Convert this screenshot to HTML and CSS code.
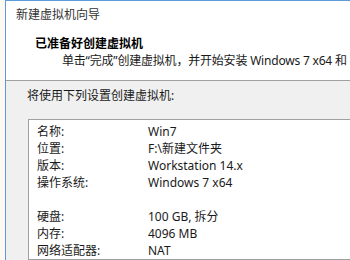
FILE: index.html
```html
<!DOCTYPE html>
<html lang="zh-CN">
<head>
    <meta charset="UTF-8">
    <title>新建虚拟机向导</title>
    <link rel="stylesheet" href="styles.css">
</head>
<body>
    <div class="window">
        <div class="title">新建虚拟机向导</div>

        <div class="header">
            <h3>已准备好创建虚拟机</h3>
            <p>单击“完成”创建虚拟机，并开始安装 Windows 7 x64 和</p>
        </div>

        <div class="content">
            <p class="lead">将使用下列设置创建虚拟机:</p>
            <div class="summary">
                <div class="row"><span class="key">名称:</span><span>Win7</span></div>
                <div class="row"><span class="key">位置:</span><span>F:\新建文件夹</span></div>
                <div class="row"><span class="key">版本:</span><span>Workstation 14.x</span></div>
                <div class="row"><span class="key">操作系统:</span><span>Windows 7 x64</span></div>
                <div class="row"></div>
                <div class="row"><span class="key">硬盘:</span><span>100 GB, 拆分</span></div>
                <div class="row"><span class="key">内存:</span><span>4096 MB</span></div>
                <div class="row"><span class="key">网络适配器:</span><span>NAT</span></div>
            </div>
        </div>
    </div>
</body>
</html>
```

FILE: styles.css
```css
body {
    margin: 0;
    background: #fdf8f2;
    font-family: "Noto Sans", "Noto Sans CJK SC", sans-serif;
    font-size: 12px;
    color: #1a1a1a;
    overflow: hidden;
}

.window {
    margin-left: 5px;
    height: 260px;
    border-left: 1px solid #5b9bd9;
    border-top: 1px solid #5b9bd9;
    background: #f0f0f0;
    box-sizing: border-box;
    display: flex;
    flex-direction: column;
    white-space: nowrap;
    overflow: hidden;
}

.title {
    background: #fff;
    padding: 6px 0 0 10px;
    height: 23px;
    line-height: 16px;
    color: #333;
}

.header {
    background: #fff;
    height: 55px;
    padding-left: 29px;
    border-bottom: 1px solid #a0a0a0;
}

.header h3 {
    margin: 7px 0 0;
    font-size: 12px;
    line-height: 16px;
    font-weight: bold;
    color: #000;
}

.header p {
    margin: 1px 0 0 27px;
    line-height: 16px;
    letter-spacing: -0.2px;
}

.lead {
    margin: 7px 0 0 21px;
    line-height: 16px;
}

.summary {
    margin: 15px 0 0 22px;
    background: #fff;
    border: 1px solid #a0a0a0;
    border-right: none;
    padding: 3px 0 0 8px;
}

.row {
    display: flex;
    height: 17px;
    line-height: 17px;
}

.key {
    width: 111px;
}
```
